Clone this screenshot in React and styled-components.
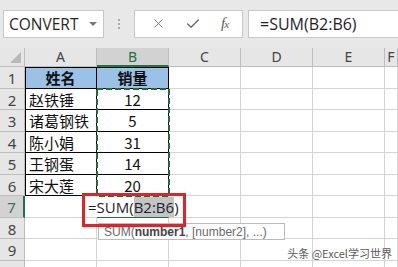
import styled, { createGlobalStyle } from "styled-components";
import { X, Check } from "lucide-react";

const GlobalStyle = createGlobalStyle`
  html, body {
    margin: 0;
    padding: 0;
    background: #ffffff;
    overflow: hidden;
  }
  * {
    box-sizing: border-box;
  }
`;

const Page = styled.div`
  width: 398px;
  height: 267px;
  overflow: hidden;
  position: relative;
  font-family: "Noto Sans CJK SC", "Noto Sans", sans-serif;
`;

const Toolbar = styled.div`
  height: 48px;
  background: #e8e8e8;
  display: flex;
  align-items: center;
  padding-left: 3px;
  padding-bottom: 1px;
`;

const NameBox = styled.div`
  width: 101px;
  height: 28px;
  background: #fff;
  border: 1px solid #c8c8c8;
  display: flex;
  align-items: center;
  justify-content: space-between;
  padding: 0 6px 0 5px;
  font-family: "Open Sans", "Noto Sans", sans-serif;
  font-size: 15.5px;
  color: #262626;
`;

const Caret = styled.span`
  width: 0;
  height: 0;
  border-left: 4px solid transparent;
  border-right: 4px solid transparent;
  border-top: 4px solid #777;
  margin-top: 1px;
`;

const Dots = styled.div`
  width: 30px;
  display: flex;
  flex-direction: column;
  align-items: center;
  gap: 2px;
  span {
    width: 2px;
    height: 2px;
    background: #a8a8a8;
  }
`;

const ActionBox = styled.div`
  width: 109px;
  height: 28px;
  background: #fff;
  border: 1px solid #c8c8c8;
  display: flex;
  align-items: center;
  justify-content: space-around;
  padding: 0 4px 0 6px;
  color: #6a6a6a;
`;

const Fx = styled.span`
  font-family: "Liberation Serif", serif;
  font-style: italic;
  font-size: 15px;
  color: #5a5a5a;
  letter-spacing: -1px;
  small {
    font-size: 11px;
  }
`;

const FormulaBox = styled.div`
  flex: 1;
  height: 28px;
  margin-left: 5px;
  background: #fff;
  border: 1px solid #c8c8c8;
  border-right: none;
  display: flex;
  align-items: center;
  padding-left: 11px;
  font-family: "Open Sans", "Noto Sans", sans-serif;
  font-size: 16px;
  color: #1e1e2e;
`;

const Sheet = styled.div`
  position: relative;
  display: grid;
  grid-template-columns: 25px repeat(5, 72px) 1fr;
  grid-template-rows: 19px 22px 21px 22px 21px 22px 21px 22px 21px 22px 21px;
`;

const Corner = styled.div`
  background: #e6e6e6;
  border-right: 1px solid #bdbdbd;
  border-bottom: 1px solid #bdbdbd;
  display: flex;
  align-items: flex-end;
  justify-content: flex-end;
  padding: 0 3px 3px 0;
  &::after {
    content: "";
    width: 0;
    height: 0;
    border-left: 11px solid transparent;
    border-bottom: 11px solid #b8b8b8;
  }
`;

const ColHead = styled.div`
  background: ${p => (p.$active ? "#d2d2d2" : "#e6e6e6")};
  color: ${p => (p.$active ? "#217346" : "#444")};
  border-right: 1px solid #bdbdbd;
  border-bottom: ${p => (p.$active ? "2px solid #217346" : "1px solid #bdbdbd")};
  display: flex;
  align-items: center;
  justify-content: center;
  font-family: "Noto Sans", sans-serif;
  font-size: 14px;
  line-height: 1;
  padding-top: ${p => (p.$active ? "1px" : "0")};
`;

const RowHead = styled.div`
  background: ${p => (p.$active ? "#d2d2d2" : "#e6e6e6")};
  color: ${p => (p.$active ? "#3f6f55" : "#444")};
  border-right: ${p => (p.$active ? "2px solid #217346" : "1px solid #bdbdbd")};
  border-bottom: 1px solid #bdbdbd;
  display: flex;
  align-items: center;
  justify-content: center;
  font-family: "Noto Sans", sans-serif;
  font-size: 15px;
  line-height: 1;
  padding-top: 2px;
`;

const Cell = styled.div`
  background: ${p => (p.$head ? "#9bc2e6" : "#fff")};
  border-right: 1px solid ${p => (p.$table ? "#000" : "#d4d4d4")};
  border-bottom: ${p =>
    p.$active ? "2px solid #217346" : `1px solid ${p.$table ? "#000" : "#d4d4d4"}`};
  box-shadow: ${p =>
    [p.$top && "inset 0 1px 0 #000", p.$left && "inset 1px 0 0 #000"]
      .filter(Boolean)
      .join(", ") || "none"};
  display: flex;
  align-items: center;
  justify-content: ${p => (p.$center ? "center" : "flex-start")};
  padding-left: ${p => (p.$center ? "0" : "4px")};
  font-size: 15px;
  font-weight: ${p => (p.$head ? 700 : 400)};
  color: #111;
  line-height: 1;
  white-space: nowrap;
`;

const Ants = styled.svg`
  position: absolute;
  left: 96px;
  top: 40px;
  width: 74px;
  height: 110px;
  z-index: 2;
  pointer-events: none;
`;

const Editor = styled.div`
  position: absolute;
  left: 84px;
  top: 149px;
  width: 97px;
  height: 20px;
  background: #fff;
  z-index: 3;
  display: flex;
  align-items: center;
  padding-left: 4px;
  font-family: "Open Sans", "Noto Sans", sans-serif;
  font-size: 15px;
  color: #1e1e2e;
  mark {
    background: #c4c4c4;
    color: #1e1e2e;
  }
`;

const Callout = styled.div`
  position: absolute;
  left: 82px;
  top: 145px;
  width: 104px;
  height: 34px;
  border: 3px solid #e5202b;
  z-index: 5;
`;

const Tooltip = styled.div`
  position: absolute;
  left: 98px;
  top: 175px;
  width: 187px;
  height: 17px;
  background: #fff;
  border: 1px solid #bcbcbc;
  z-index: 4;
  display: flex;
  align-items: center;
  padding-left: 5px;
  font-family: "Liberation Sans", sans-serif;
  font-size: 12px;
  color: #6a6a6a;
  white-space: nowrap;
  b {
    color: #444;
  }
`;

const Watermark = styled.div`
  position: absolute;
  right: 6px;
  bottom: 6px;
  font-size: 11px;
  color: #5c5c5c;
  z-index: 6;
  white-space: nowrap;
`;

const cols = ["A", "B", "C", "D", "E", "F"];
const rows = [
  ["姓名", "销量"],
  ["赵铁锤", "12"],
  ["诸葛钢铁", "5"],
  ["陈小娟", "31"],
  ["王钢蛋", "14"],
  ["宋大莲", "20"],
];

function App() {
  const body = [];
  for (let r = 1; r <= 10; r++) {
    body.push(
      <RowHead key={`h${r}`} $active={r === 7}>
        {r < 10 ? r : ""}
      </RowHead>
    );
    for (let c = 0; c < 6; c++) {
      const inTable = r <= 6 && c < 2;
      const text = inTable ? rows[r - 1][c] : "";
      body.push(
        <Cell
          key={`${r}-${c}`}
          $table={inTable}
          $head={inTable && r === 1}
          $top={inTable && r === 1}
          $left={inTable && c === 0}
          $center={c === 1 || r === 1}
          $active={r === 7 && c === 1}
        >
          {text}
        </Cell>
      );
    }
  }

  return (
    <Page>
      <GlobalStyle />
      <Toolbar>
        <NameBox>
          CONVERT
          <Caret />
        </NameBox>
        <Dots>
          <span />
          <span />
          <span />
        </Dots>
        <ActionBox>
          <X size={15} strokeWidth={1.4} />
          <Check size={16} strokeWidth={2} />
          <Fx>
            f<small>x</small>
          </Fx>
        </ActionBox>
        <FormulaBox>=SUM(B2:B6)</FormulaBox>
      </Toolbar>
      <Sheet>
        <Corner />
        {cols.map(c => (
          <ColHead key={c} $active={c === "B"}>
            {c}
          </ColHead>
        ))}
        {body}
        <Ants>
          <rect
            x="1"
            y="1"
            width="72"
            height="107"
            fill="none"
            stroke="#1c6a3f"
            strokeWidth="2"
            strokeDasharray="6 3"
            shapeRendering="crispEdges"
          />
        </Ants>
        <Editor>
          =SUM(<mark>B2:B6</mark>)
        </Editor>
        <Tooltip>
          SUM(<b>number1</b>, [number2], ...)
        </Tooltip>
        <Callout />
      </Sheet>
      <Watermark>头条 @Excel学习世界</Watermark>
    </Page>
  );
}

export default App;
